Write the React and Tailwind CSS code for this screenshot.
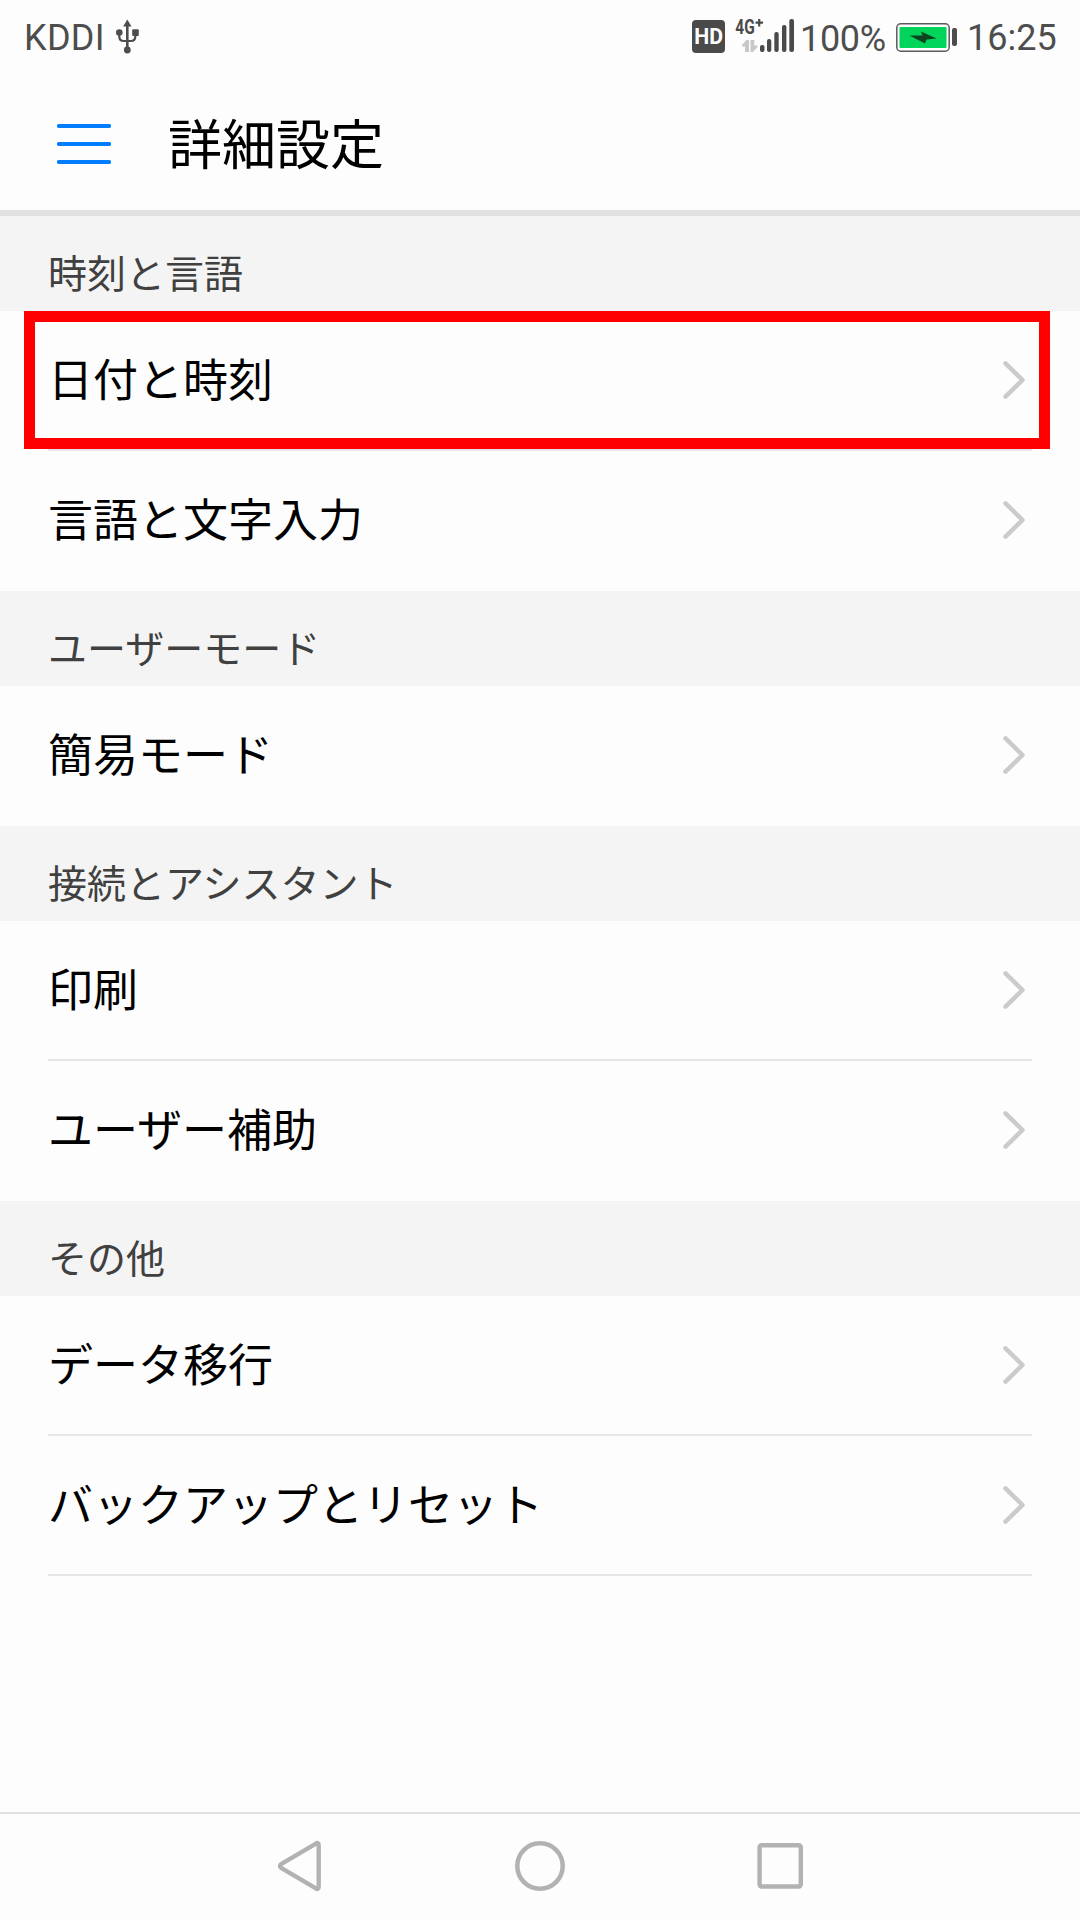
/**
 * Advanced Settings
 * Settings list grouped by section, with status bar and navigation bar
 */

import React from 'react';

const sections = [
  {
    title: '時刻と言語',
    items: [
      { label: '日付と時刻', highlighted: true, divider: true },
      { label: '言語と文字入力' },
    ],
  },
  {
    title: 'ユーザーモード',
    items: [{ label: '簡易モード' }],
  },
  {
    title: '接続とアシスタント',
    items: [{ label: '印刷', divider: true }, { label: 'ユーザー補助' }],
  },
  {
    title: 'その他',
    items: [
      { label: 'データ移行', divider: true },
      { label: 'バックアップとリセット', divider: true },
    ],
  },
];

const UsbIcon = () => (
  <svg className="w-6 h-9" viewBox="0 0 24 36" fill="none">
    <path d="M12.3 6V30" stroke="#4d4d4d" strokeWidth="2.6" />
    <path d="M12.3 0.5L16.5 7.5H8.1Z" fill="#4d4d4d" />
    <path d="M4.3 14V17.5Q4.3 22 8.8 22H15.8Q20.3 22 20.3 17.5V14" stroke="#4d4d4d" strokeWidth="2.2" />
    <circle cx="4.3" cy="13.5" r="3.3" fill="#4d4d4d" />
    <rect x="17.2" y="10.3" width="6.6" height="6.6" rx="1" fill="#4d4d4d" />
    <circle cx="12.3" cy="31" r="3.4" fill="#4d4d4d" />
  </svg>
);

const HdIcon = () => (
  <svg className="w-[33px] h-[33px]" viewBox="0 0 33 33">
    <rect width="33" height="33" rx="4" fill="#4a4a4a" />
    <text x="2.2" y="24" fontFamily="Roboto" fontSize="21.5" fontWeight="700" fill="#fdfdfd" textLength="28.8" lengthAdjust="spacingAndGlyphs">
      HD
    </text>
  </svg>
);

const SignalIcon = () => (
  <svg className="-mt-2 w-[60px] h-11" viewBox="0 -8 60 44">
    <text x="0.3" y="14.8" fontFamily="Roboto" fontSize="20" fontWeight="700" fill="#4a4a4a" textLength="19.4" lengthAdjust="spacingAndGlyphs">
      4G
    </text>
    <path d="M20.5 3.6H28M24.2 0V7.4" stroke="#4a4a4a" strokeWidth="2.2" />
    {/* Data transfer arrows */}
    <path d="M14 21V33H10V27.5H7V26L11.5 21Z" fill="#c8c8c8" />
    <path d="M15.5 21H19.3V26.5H22.5V28L18 33H15.5Z" fill="#c8c8c8" />
    <g fill="#4a4a4a">
      <rect x="25" y="26" width="4.5" height="7" rx="2" />
      <rect x="32" y="20" width="4.3" height="13" rx="2" />
      <rect x="39.3" y="13" width="4.4" height="20" rx="2" />
      <rect x="47" y="6" width="4.4" height="27" rx="2" />
      <rect x="54.3" y="0" width="4.7" height="33" rx="2" />
    </g>
  </svg>
);

const BatteryIcon = () => (
  <svg className="w-[62px] h-[29px]" viewBox="0 0 62 29">
    <rect x="0.8" y="0.8" width="52.4" height="27.4" rx="4" fill="#fff" stroke="#5a5a5a" strokeWidth="1.5" />
    <rect x="3.5" y="4" width="47" height="21" rx="1" fill="#00d45a" />
    <path d="M13.5 12.5H26.5L25 8.5L40.5 15.5L30.5 16.5L29 20.5Z" fill="#0c4420" />
    <rect x="56" y="5" width="5" height="18" rx="2" fill="#4d4d4d" />
  </svg>
);

const ChevronIcon = () => (
  <svg className="w-6 h-10" viewBox="0 0 24 40" fill="none">
    <path d="M4.5 3.3L21.5 20L4.5 36.7" stroke="#cbcbcb" strokeWidth="4.5" strokeLinecap="round" strokeLinejoin="round" />
  </svg>
);

const StatusBar = () => (
  <div className="flex h-[75px] items-start justify-between text-[36px] leading-[36px] text-[#4d4d4d]">
    <div className="flex pl-[24px] pt-[19px]">
      <span className="w-[91px] pt-px tracking-[0.3px]">KDDI</span>
      <UsbIcon />
    </div>
    <div className="flex pt-[19px]">
      <div className="mt-px mr-[10px]">
        <HdIcon />
      </div>
      <SignalIcon />
      <span className="ml-[5px] w-[96px] pt-[2px] whitespace-nowrap tracking-[-0.3px]">100%</span>
      <div className="mt-[4px] w-[71px]">
        <BatteryIcon />
      </div>
      <span className="w-[113px] pt-px">16:25</span>
    </div>
  </div>
);

const Header = () => (
  <header className="flex h-[141px] items-start border-b-[6px] border-[#e1e1e1] pl-[57px]">
    <svg className="mt-[48px] w-[54px] h-[42px]" viewBox="0 0 54 42">
      <path d="M2 3H52M2 21H52M2 39H52" stroke="#007dff" strokeWidth="4.2" strokeLinecap="round" />
    </svg>
    <h1 className="ml-[57px] mt-[32px] text-[54px] leading-[80px] text-black">詳細設定</h1>
  </header>
);

const SettingItem = ({ item }) => (
  <li className="relative mx-[48px] flex h-[140px] items-center justify-between">
    <span className="mt-[2px] text-[45px] leading-[60px] text-black">{item.label}</span>
    <div className="mr-[7px] mb-[2px]">
      <ChevronIcon />
    </div>
    {item.divider && <div className="absolute inset-x-0 bottom-0 h-[2px] bg-[#e6e6e6]" />}
    {/* Highlight frame */}
    {item.highlighted && (
      <div className="absolute -left-[24px] top-0 h-[138px] w-[1026px] border-[11px] border-[#ff0000]" />
    )}
  </li>
);

const NavigationBar = () => (
  <nav className="flex h-[108px] items-start justify-between border-t-2 border-[#e1e1e1] pt-[26px] pl-[275px] pr-[275px]">
    <svg className="w-[50px] h-[52px]" viewBox="0 0 50 52" fill="none">
      <path d="M43.7 5.5Q43.7 1.5 40.5 3.8L6.5 23.8Q3.5 26 6.5 28.2L40.5 48.2Q43.7 50.5 43.7 46.5Z" stroke="#b2b2b2" strokeWidth="4.4" strokeLinejoin="round" />
    </svg>
    <svg className="w-[50px] h-[52px]" viewBox="0 0 50 52" fill="none">
      <circle cx="25" cy="26" r="22.7" stroke="#b2b2b2" strokeWidth="4.5" />
    </svg>
    <svg className="w-[50px] h-[52px]" viewBox="0 0 50 52" fill="none">
      <rect x="4.6" y="5.3" width="41.2" height="41.2" rx="2" stroke="#b2b2b2" strokeWidth="4.4" />
    </svg>
  </nav>
);

const App = () => {
  return (
    <div className="flex h-[1920px] w-[1080px] flex-col overflow-hidden bg-[#fdfdfd] font-[Roboto,'Noto_Sans_CJK_JP',sans-serif]">
      <StatusBar />
      <Header />

      {/* Settings list */}
      <main className="flex-1">
        {sections.map((section) => (
          <section key={section.title}>
            <h2 className="h-[95px] bg-[#f4f4f4] pl-[48px] pt-[29px] text-[39px] leading-[60px] text-[#404040]">
              {section.title}
            </h2>
            <ul>
              {section.items.map((item) => (
                <SettingItem key={item.label} item={item} />
              ))}
            </ul>
          </section>
        ))}
      </main>

      <NavigationBar />
    </div>
  );
};

export default App;
